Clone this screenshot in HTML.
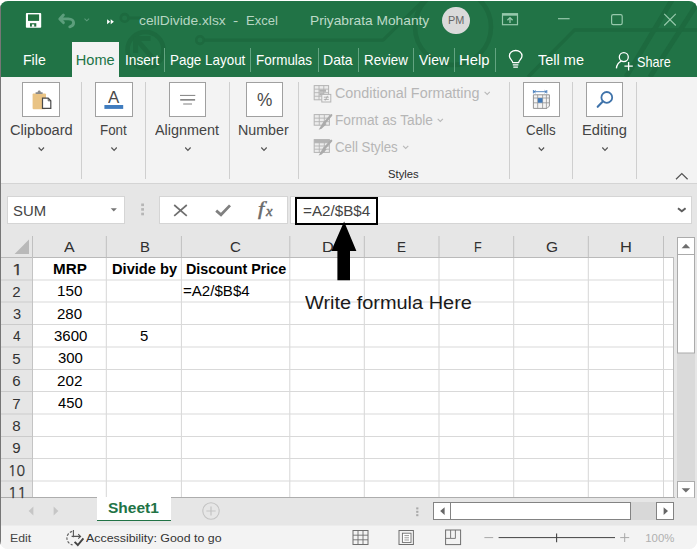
<!DOCTYPE html>
<html><head><meta charset="utf-8">
<style>
html,body{margin:0;padding:0;}
body{width:700px;height:549px;overflow:hidden;background:#ffffff;position:relative;font-family:"Liberation Sans",sans-serif;}
.a,.t,svg{position:absolute;}
.t{white-space:nowrap;line-height:1;transform-origin:0 50%;}
#win{position:absolute;left:0;top:1px;width:697px;height:548px;background:#f3f3f3;overflow:hidden;border-radius:8px 8px 8px 8px;}
#inner{position:absolute;left:0;top:-1px;width:700px;height:549px;}
.sep{position:absolute;width:1px;background:#63a481;top:48px;height:24px;}
.rsep{position:absolute;width:1px;background:#cfcfcf;top:82px;height:97px;}
.box{position:absolute;top:82px;width:35.7px;height:33.4px;background:#fff;border:1px solid #a0a0a0;}
.vl{position:absolute;width:1px;background:#dadada;top:257px;height:241px;}
.hl{position:absolute;height:1px;background:#dadada;left:33px;width:641px;}
.chl{position:absolute;width:1px;background:#c4c4c4;top:238px;height:19px;}
.rhl{position:absolute;height:1px;background:#c4c4c4;left:1px;width:32px;}
</style></head><body>
<div id="win"><div id="inner">
<div class="a" style="left:0;top:0;width:700px;height:77px;background:#217346;"></div>
<svg style="left:0px;top:0px;" width="700" height="77" viewBox="0 0 700 77"><circle cx="124.6" cy="17.9" r="3.8" fill="none" stroke="#1d6a3f" stroke-width="2.6"/><path d="M129 17.9 H141" fill="none" stroke="#1d6a3f" stroke-width="3"/><circle cx="145.5" cy="50" r="18" fill="none" stroke="#1d6a3f" stroke-width="4.5"/><path d="M155 61 L137.5 40.5 M135.6 38.6 H150.5 M135.6 36.4 V53" fill="none" stroke="#1d6a3f" stroke-width="5"/><circle cx="200" cy="40.1" r="3.8" fill="none" stroke="#1d6a3f" stroke-width="2.6"/><path d="M204.4 40.1 H383 L424 0" fill="none" stroke="#1d6a3f" stroke-width="3.2"/><circle cx="453" cy="27" r="38" fill="none" stroke="#1d6a3f" stroke-width="4.5"/><path d="M528 77 L574.5 30 H697" fill="none" stroke="#1d6a3f" stroke-width="3.4"/><path d="M626 77 L672 0" fill="none" stroke="#1d6a3f" stroke-width="5"/><path d="M650 77 L697 4" fill="none" stroke="#1d6a3f" stroke-width="5"/></svg>
<!-- avatar -->
<div class="a" style="left:442.3px;top:6.6px;width:27.6px;height:27.6px;border-radius:50%;background:#dadada;"></div>
<!-- active tab -->
<div class="a" style="left:72px;top:42px;width:47px;height:36px;background:#f3f3f3;"></div>
<div class="sep" style="left:164px"></div><div class="sep" style="left:250px"></div><div class="sep" style="left:318px"></div><div class="sep" style="left:358px"></div><div class="sep" style="left:413px"></div><div class="sep" style="left:454px"></div><div class="sep" style="left:495px"></div>
<svg style="left:24px;top:11px;" width="20" height="19" viewBox="24 11 20 19"><rect x="25.9" y="13.1" width="15.3" height="14.6" rx="0.8" fill="#fff"/><rect x="28" y="14.4" width="11.1" height="6.5" fill="#21703f"/><rect x="30" y="23.2" width="6.3" height="3.4" fill="#21703f"/><rect x="31.9" y="24.4" width="2.3" height="2.4" fill="#fff"/></svg>
<svg style="left:56px;top:11px;" width="36" height="19" viewBox="56 11 36 19"><path d="M63.4 15 L59.8 18.9 L63.4 22.6 M60.4 18.9 H68.3 C71.8 18.9 73.6 20.8 73.6 22.8 C73.6 24.8 72.2 26.2 69.8 26.8" fill="none" stroke="#5c9e7c" stroke-width="2.9" stroke-linecap="round" stroke-linejoin="round"/><path d="M84.5 18.7 L86.8 20.8 L89.1 18.7" fill="none" stroke="#5a9c7a" stroke-width="1.1"/></svg>
<svg style="left:105px;top:17px;" width="12" height="10" viewBox="105 17 12 10"><path d="M107.1 19.3 L110.2 21.8 L107.1 24.3 Z M110.7 19.3 L113.9 21.8 L110.7 24.3 Z" fill="#fff"/></svg>
<svg style="left:500px;top:11px;" width="20" height="17" viewBox="500 11 20 17"><rect x="502.5" y="13.9" width="15" height="10.8" fill="none" stroke="#96c8ab" stroke-width="1.2"/><rect x="502" y="13.3" width="16" height="2.4" fill="#96c8ab"/><path d="M510 23 V17.8 M507.4 20.2 L510 17.6 L512.6 20.2" fill="none" stroke="#96c8ab" stroke-width="1.3"/></svg>
<svg style="left:556px;top:16px;" width="16" height="6" viewBox="556 16 16 6"><rect x="558" y="18.1" width="11.6" height="1.2" fill="#96c8ab"/></svg>
<svg style="left:609px;top:12px;" width="16" height="16" viewBox="609 12 16 16"><rect x="611.6" y="14.7" width="10.6" height="10" rx="1.6" fill="none" stroke="#96c8ab" stroke-width="1.2"/></svg>
<svg style="left:662px;top:12px;" width="16" height="16" viewBox="662 12 16 16"><path d="M664.2 13.9 L675.8 25.5 M675.8 13.9 L664.2 25.5" fill="none" stroke="#96c8ab" stroke-width="1.2"/></svg>
<svg style="left:506px;top:47px;" width="20" height="24" viewBox="506 47 20 24"><path d="M512.7 62.6 C512.7 60.4 509.4 59.2 509.4 56.1 C509.4 52.8 512.2 50.5 515.7 50.5 C519.2 50.5 522 52.8 522 56.1 C522 59.2 518.7 60.4 518.7 62.6 Z" fill="none" stroke="#fff" stroke-width="1.3" stroke-linejoin="round"/><path d="M512.8 64.8 H518.4 M513.3 67.2 H517.9" fill="none" stroke="#fff" stroke-width="1.3"/></svg>
<svg style="left:614px;top:47px;" width="22" height="24" viewBox="614 47 22 24"><circle cx="623.8" cy="57.1" r="4.5" fill="none" stroke="#fff" stroke-width="1.3"/><path d="M616.4 68.4 C616.8 64.6 618.6 62.4 621.4 61.2" fill="none" stroke="#fff" stroke-width="1.3"/><path d="M628.6 62 V70.4 M624.4 66.2 H632.8" fill="none" stroke="#fff" stroke-width="1.3"/></svg>
<!-- ribbon -->
<div class="a" style="left:0;top:183px;width:700px;height:14px;background:#e6e6e6;"></div>
<div class="a" style="left:0;top:183px;width:700px;height:1px;background:#d4d4d4;"></div>
<div class="box" style="left:22px;width:35.8px"></div><div class="box" style="left:95.1px;width:35.7px"></div><div class="box" style="left:169px;width:35.1px"></div><div class="box" style="left:245.6px;width:35.2px"></div><div class="box" style="left:522.9px;width:35.1px"></div><div class="box" style="left:586.3px;width:35.1px"></div>
<div class="rsep" style="left:81px"></div><div class="rsep" style="left:145px"></div><div class="rsep" style="left:229px"></div><div class="rsep" style="left:298px"></div><div class="rsep" style="left:509px"></div><div class="rsep" style="left:572px"></div><div class="rsep" style="left:636px"></div>
<svg style="left:0px;top:80px;" width="700" height="104" viewBox="0 80 700 104"><path d="M38.6 147.5 L41.3 150.3 L44 147.5" fill="none" stroke="#555" stroke-width="1.2"/><path d="M111.4 147.5 L114.1 150.3 L116.8 147.5" fill="none" stroke="#555" stroke-width="1.2"/><path d="M185.2 147.5 L187.9 150.3 L190.6 147.5" fill="none" stroke="#555" stroke-width="1.2"/><path d="M261.3 147.5 L264 150.3 L266.7 147.5" fill="none" stroke="#555" stroke-width="1.2"/><path d="M538.7 147.5 L541.4 150.3 L544.1 147.5" fill="none" stroke="#555" stroke-width="1.2"/><path d="M602.3 147.5 L605 150.3 L607.7 147.5" fill="none" stroke="#555" stroke-width="1.2"/><path d="M484.6 91.9 L487.2 94.5 L489.8 91.9" fill="none" stroke="#b9b9b9" stroke-width="1.1"/><path d="M437.7 118.9 L440.3 121.5 L442.9 118.9" fill="none" stroke="#b9b9b9" stroke-width="1.1"/><path d="M403.1 145.9 L405.7 148.5 L408.3 145.9" fill="none" stroke="#b9b9b9" stroke-width="1.1"/><path d="M676 179.2 L681.8 173.6 L687.6 179.2" fill="none" stroke="#555" stroke-width="1.3"/><rect x="32.6" y="93.4" width="13.4" height="15.8" rx="1" fill="#e9c384"/><path d="M35.6 94 V92.2 H37.6 C37.6 89.8 40.8 89.8 40.8 92.2 H42.6 V94 Z" fill="#8a8a8a"/><path d="M42.5 98.2 H48.2 L50.8 100.8 V108.4 H42.5 Z" fill="#fff" stroke="#4a4a4a" stroke-width="1.2"/><path d="M48.2 98.2 V100.8 H50.8" fill="none" stroke="#4a4a4a" stroke-width="0.9"/><rect x="104.4" y="105" width="18.8" height="3.9" fill="#3f7cbf"/><path d="M180 95.4 H195.3 M183.2 104 H192" stroke="#808080" stroke-width="1" fill="none"/><path d="M180.2 99.9 H195.1" stroke="#606060" stroke-width="1.2" fill="none"/><path d="M533.4 94.8 H549.4 V106 L547 108.4 H533.4 Z" fill="#f4f4f4" stroke="#949494" stroke-width="1"/><path d="M533.4 98 H549.4 M533.4 102.8 H549.4 M537.7 94.8 V108.4 M542.6 94.8 V108.4 M546.4 94.8 V108.4" stroke="#949494" stroke-width="0.8" fill="none"/><rect x="537.9" y="98.1" width="4.6" height="4.6" fill="#3f78b8"/><path d="M533.6 91.7 H546.6 M533.4 90 V93.4 M546.8 90 V93.4 M535.6 90.4 L534 91.7 L535.6 93 M544.6 90.4 L546.2 91.7 L544.6 93" stroke="#3f78b8" stroke-width="0.9" fill="none"/><circle cx="606.8" cy="97.4" r="5.4" fill="none" stroke="#3f73aa" stroke-width="1.8"/><path d="M602.8 101.6 L597.7 106.8" stroke="#3f73aa" stroke-width="2.1" fill="none" stroke-linecap="round"/><rect x="314.2" y="85.6" width="14.4" height="14.2" fill="#ececec" stroke="#b4b4b4" stroke-width="1"/><path d="M314.2 89.15 H328.6 M314.2 92.7 H328.6 M314.2 96.25 H328.6 M319 85.6 V99.8 M323.8 85.6 V99.8 " stroke="#b4b4b4" stroke-width="0.9" fill="none"/><rect x="319.4" y="89.6" width="6.6" height="2.2" fill="#b0b0b0"/><rect x="319.4" y="93.2" width="4.4" height="2.2" fill="#b0b0b0"/><rect x="321.8" y="94.4" width="9" height="7.6" fill="#f3f3f3" stroke="#b4b4b4" stroke-width="1"/><path d="M323.8 97.2 H328.8 M323.8 99.4 H328.8 M327.6 95.8 L325.2 100.6" stroke="#a8a8a8" stroke-width="0.9" fill="none"/><rect x="314.2" y="114.6" width="15.2" height="10.6" fill="#ececec" stroke="#b4b4b4" stroke-width="1"/><path d="M314.2 118.133 H329.4 M314.2 121.667 H329.4 M319.267 114.6 V125.2 M324.333 114.6 V125.2 " stroke="#b4b4b4" stroke-width="0.9" fill="none"/><path d="M331.2 115.2 L325 122.2" stroke="#ababab" stroke-width="2.3" fill="none" stroke-linecap="round"/><path d="M323.6 121.4 L326.6 124 L321.6 128.8 L318.6 129.8 Z" fill="#ababab"/><rect x="314.2" y="139.6" width="15.2" height="12.8" fill="#ececec" stroke="#b4b4b4" stroke-width="1"/><path d="M314.2 142.8 H329.4 M314.2 146 H329.4 M314.2 149.2 H329.4 M319.267 139.6 V152.4 M324.333 139.6 V152.4 " stroke="#b4b4b4" stroke-width="0.9" fill="none"/><rect x="314.2" y="139.6" width="15.2" height="3.2" fill="#b4b4b4"/><path d="M331.2 140.8 L325 147.8" stroke="#ababab" stroke-width="2.3" fill="none" stroke-linecap="round"/><path d="M323.6 147 L326.6 149.6 L321.6 154.4 L318.6 155.4 Z" fill="#ababab"/></svg>
<!-- formula bar area -->
<div class="a" style="left:0;top:184px;width:700px;height:52px;background:#e6e6e6;"></div>
<div class="a" style="left:7px;top:196px;width:116px;height:26px;background:#fff;border:1px solid #d5d5d5;"></div>
<div class="a" style="left:159px;top:196px;width:127px;height:26px;background:#fff;border:1px solid #d5d5d5;"></div>
<div class="a" style="left:290px;top:196px;width:400px;height:26px;background:#fff;border:1px solid #d5d5d5;"></div>
<div class="a" style="left:295px;top:197px;width:79px;height:24px;border:2px solid #000;background:#fff;"></div>
<svg style="left:0px;top:196px;" width="700" height="30" viewBox="0 196 700 30"><path d="M110.7 208.3 H116.9 L113.8 211.6 Z" fill="#767676"/><rect x="141.2" y="203.5" width="2.8" height="2.6" fill="#b6b6b6"/><rect x="141.2" y="208.1" width="2.8" height="2.6" fill="#b6b6b6"/><rect x="141.2" y="212.7" width="2.8" height="2.6" fill="#b6b6b6"/><path d="M174.2 205 L186.8 215.8 M186.8 205 L174.2 215.8" stroke="#707070" stroke-width="1.7" fill="none"/><path d="M216.2 210.6 L221 214.8 L230 205.4" stroke="#808080" stroke-width="2.8" fill="none"/><path d="M678 208.2 L681.8 211.3 L685.6 208.2" stroke="#5e5e5e" stroke-width="2" fill="none"/></svg>
<!-- grid -->
<div class="a" style="left:0;top:235px;width:700px;height:263px;background:#e6e6e6;"></div>
<div class="a" style="left:33px;top:257px;width:641px;height:241px;background:#fff;"></div>
<svg style="left:0px;top:220px;" width="700" height="279" viewBox="0 220 700 279"><rect x="105.8" y="257" width="1" height="241" fill="#d6d6d6"/><rect x="180.9" y="257" width="1" height="241" fill="#d6d6d6"/><rect x="289.3" y="257" width="1" height="241" fill="#d6d6d6"/><rect x="363.8" y="257" width="1" height="241" fill="#d6d6d6"/><rect x="438.5" y="257" width="1" height="241" fill="#d6d6d6"/><rect x="513.2" y="257" width="1" height="241" fill="#d6d6d6"/><rect x="587.8" y="257" width="1" height="241" fill="#d6d6d6"/><rect x="663" y="257" width="1" height="241" fill="#d6d6d6"/><rect x="33" y="279.5" width="641" height="1" fill="#d9d9d9"/><rect x="1" y="279.5" width="32" height="1" fill="#cbcbcb"/><rect x="33" y="301.5" width="641" height="1" fill="#d9d9d9"/><rect x="1" y="301.5" width="32" height="1" fill="#cbcbcb"/><rect x="33" y="324" width="641" height="1" fill="#d9d9d9"/><rect x="1" y="324" width="32" height="1" fill="#cbcbcb"/><rect x="33" y="346.5" width="641" height="1" fill="#d9d9d9"/><rect x="1" y="346.5" width="32" height="1" fill="#cbcbcb"/><rect x="33" y="369" width="641" height="1" fill="#d9d9d9"/><rect x="1" y="369" width="32" height="1" fill="#cbcbcb"/><rect x="33" y="391" width="641" height="1" fill="#d9d9d9"/><rect x="1" y="391" width="32" height="1" fill="#cbcbcb"/><rect x="33" y="413.5" width="641" height="1" fill="#d9d9d9"/><rect x="1" y="413.5" width="32" height="1" fill="#cbcbcb"/><rect x="33" y="436" width="641" height="1" fill="#d9d9d9"/><rect x="1" y="436" width="32" height="1" fill="#cbcbcb"/><rect x="33" y="458" width="641" height="1" fill="#d9d9d9"/><rect x="1" y="458" width="32" height="1" fill="#cbcbcb"/><rect x="33" y="480.5" width="641" height="1" fill="#d9d9d9"/><rect x="1" y="480.5" width="32" height="1" fill="#cbcbcb"/><rect x="32" y="236" width="1" height="21" fill="#c0c0c0"/><rect x="105.8" y="236" width="1" height="21" fill="#c0c0c0"/><rect x="180.9" y="236" width="1" height="21" fill="#c0c0c0"/><rect x="289.3" y="236" width="1" height="21" fill="#c0c0c0"/><rect x="363.8" y="236" width="1" height="21" fill="#c0c0c0"/><rect x="438.5" y="236" width="1" height="21" fill="#c0c0c0"/><rect x="513.2" y="236" width="1" height="21" fill="#c0c0c0"/><rect x="587.8" y="236" width="1" height="21" fill="#c0c0c0"/><rect x="663" y="236" width="1" height="21" fill="#c0c0c0"/><rect x="1" y="257" width="673" height="1" fill="#bababa"/><rect x="32" y="257" width="1" height="241" fill="#c4c4c4"/><rect x="673" y="257" width="1" height="241" fill="#bdbdbd"/><path d="M29 239.6 V254 H14.6 Z" fill="#b9b9b9"/><path d="M344.1 221.6 L356.4 251 H350 V280.3 H337.4 V251 H331.2 Z" fill="#000"/><rect x="677" y="237" width="18" height="261" fill="#dadada"/><rect x="677.5" y="237.5" width="17" height="17" fill="#fff" stroke="#ababab" stroke-width="1"/><rect x="677.5" y="254.5" width="17" height="98.5" fill="#fff" stroke="#ababab" stroke-width="1"/><rect x="677.5" y="481.5" width="17" height="16.5" fill="#fff" stroke="#ababab" stroke-width="1"/><path d="M681.6 248.2 L685.9 243.8 L690.2 248.2 Z" fill="#6e6e6e"/><path d="M681.6 488.2 L685.9 492.6 L690.2 488.2 Z" fill="#6e6e6e"/></svg>
<!-- sheet tab bar -->
<div class="a" style="left:0;top:498px;width:700px;height:27px;background:#e6e6e6;"></div>
<div class="a" style="left:0;top:497px;width:675px;height:1.3px;background:#adadad;"></div>
<div class="a" style="left:97px;top:497px;width:74px;height:23.4px;background:#fff;border-bottom:1.8px solid #217346;"></div>
<svg style="left:0px;top:498px;" width="700" height="27" viewBox="0 498 700 27"><path d="M33.4 506.6 V515.4 L28.6 511 Z" fill="#c6c6c6"/><path d="M53.6 506.6 V515.4 L58.4 511 Z" fill="#c6c6c6"/><circle cx="211" cy="511" r="8.2" fill="none" stroke="#c3c3c3" stroke-width="1.1"/><path d="M206.4 511 H215.6 M211 506.4 V515.6" stroke="#c3c3c3" stroke-width="1.2" fill="none"/><rect x="416.2" y="507.4" width="2.2" height="2" fill="#a9a9a9"/><rect x="416.2" y="510.8" width="2.2" height="2" fill="#a9a9a9"/><rect x="416.2" y="514.2" width="2.2" height="2" fill="#a9a9a9"/><rect x="433" y="502" width="241" height="18" fill="#d8d8d8"/><rect x="433.5" y="502.5" width="17" height="17" fill="#fff" stroke="#838383" stroke-width="1"/><rect x="450.5" y="502.5" width="180" height="17" fill="#fff" stroke="#838383" stroke-width="1"/><rect x="656.5" y="502.5" width="17" height="17" fill="#fff" stroke="#838383" stroke-width="1"/><path d="M444.6 507.2 V515 L440.2 511.1 Z" fill="#666"/><path d="M663.6 507.2 V515 L668 511.1 Z" fill="#666"/></svg>
<!-- status bar -->
<div class="a" style="left:0;top:525px;width:700px;height:25px;background:#f3f3f3;"></div><div class="a" style="left:0;top:525px;width:700px;height:1px;background:#ececec;"></div>
<svg style="left:0px;top:525px;" width="700" height="24" viewBox="0 525 700 24"><path d="M72.2 531.4 A6.9 6.9 0 0 0 72.6 544.9" fill="none" stroke="#666" stroke-width="1.2" stroke-dasharray="2.6 1.5"/><path d="M73.4 530 V537.2 M71.6 536.4 H80.4 M78.2 534.2 L80.6 536.4 L78.2 538.6" fill="none" stroke="#555" stroke-width="1.1"/><path d="M74.6 541.8 L77.8 545 L83.4 538.4" fill="none" stroke="#444" stroke-width="1.9"/><rect x="353" y="530.5" width="15" height="14" fill="none" stroke="#6e6e6e" stroke-width="1"/><path d="M353 535.2 H368 M353 539.8 H368 M358 530.5 V544.5 M363 530.5 V544.5" stroke="#6e6e6e" stroke-width="0.9" fill="none"/><rect x="399" y="530.5" width="14.4" height="14" fill="none" stroke="#6e6e6e" stroke-width="1"/><rect x="402.4" y="533.2" width="8.6" height="9.2" fill="#fff" stroke="#6e6e6e" stroke-width="0.9"/><path d="M404.4 535.6 H409 M404.4 537.8 H409 M404.4 540 H409" stroke="#6e6e6e" stroke-width="0.7" fill="none"/><rect x="445.6" y="530" width="15" height="14.6" fill="none" stroke="#6e6e6e" stroke-width="1"/><path d="M450.6 530 V538.4 H445.6 M455.4 530 V538.4 H450.6" stroke="#6e6e6e" stroke-width="0.9" fill="none"/><path d="M484.4 537.6 H493.2" stroke="#a8a8a8" stroke-width="1" fill="none"/><path d="M498.6 537.6 H615" stroke="#444" stroke-width="1" fill="none"/><path d="M556.6 533.4 V542.2" stroke="#444" stroke-width="1.1" fill="none"/><path d="M620.2 537.6 H629.2 M624.7 533.2 V542" stroke="#a8a8a8" stroke-width="1" fill="none"/></svg>
<div class="t" id="title1" style="left:139.06px;top:15.36px;font-size:12.8px;color:#b7d6c3;transform:scaleX(1.0792);">cellDivide.xlsx</div>
<div class="t" id="title2" style="left:233.38px;top:15.36px;font-size:12.8px;color:#b7d6c3;transform:scaleX(1.2308);">-</div>
<div class="t" id="title3" style="left:245.98px;top:15.36px;font-size:12.8px;color:#b7d6c3;transform:scaleX(1.0169);">Excel</div>
<div class="t" id="user" style="left:309.86px;top:13.63px;font-size:13.2px;color:#bddac8;transform:scaleX(1.0428);">Priyabrata Mohanty</div>
<div class="t" id="pm" style="left:448.01px;top:15.58px;font-size:10.3px;color:#666666;transform:scaleX(1.0571);">PM</div>
<div class="t" id="tFile" style="left:23.49px;top:52.54px;font-size:14.6px;color:#ffffff;transform:scaleX(0.9674);">File</div>
<div class="t" id="tHome" style="left:75.75px;top:52.54px;font-size:14.6px;color:#217346;transform:scaleX(1.0000);">Home</div>
<div class="t" id="tInsert" style="left:124.83px;top:52.54px;font-size:14.6px;color:#ffffff;transform:scaleX(0.9362);">Insert</div>
<div class="t" id="tPL" style="left:169.85px;top:52.54px;font-size:14.6px;color:#ffffff;transform:scaleX(0.9193);">Page Layout</div>
<div class="t" id="tForm" style="left:256.15px;top:52.54px;font-size:14.6px;color:#ffffff;transform:scaleX(0.9220);">Formulas</div>
<div class="t" id="tData" style="left:323.10px;top:52.54px;font-size:14.6px;color:#ffffff;transform:scaleX(0.9627);">Data</div>
<div class="t" id="tRev" style="left:363.85px;top:52.54px;font-size:14.6px;color:#ffffff;transform:scaleX(0.9183);">Review</div>
<div class="t" id="tView" style="left:419.06px;top:52.54px;font-size:14.6px;color:#ffffff;transform:scaleX(0.9581);">View</div>
<div class="t" id="tHelp" style="left:459.43px;top:52.54px;font-size:14.6px;color:#ffffff;transform:scaleX(1.0124);">Help</div>
<div class="t" id="tTell" style="left:537.75px;top:52.54px;font-size:14.6px;color:#ffffff;transform:scaleX(0.9945);">Tell me</div>
<div class="t" id="tShare" style="left:636.85px;top:54.54px;font-size:14.6px;color:#ffffff;transform:scaleX(0.8667);">Share</div>
<div class="t" id="lClip" style="left:9.50px;top:124.32px;font-size:13.8px;color:#444444;transform:scaleX(1.0626);">Clipboard</div>
<div class="t" id="lFont" style="left:99.73px;top:124.32px;font-size:13.8px;color:#444444;transform:scaleX(0.9698);">Font</div>
<div class="t" id="lAlign" style="left:155.30px;top:124.32px;font-size:13.8px;color:#444444;transform:scaleX(1.0449);">Alignment</div>
<div class="t" id="lNum" style="left:238.37px;top:124.32px;font-size:13.8px;color:#444444;transform:scaleX(1.0333);">Number</div>
<div class="t" id="lCells" style="left:525.88px;top:124.32px;font-size:13.8px;color:#444444;transform:scaleX(0.9661);">Cells</div>
<div class="t" id="lEdit" style="left:581.84px;top:124.32px;font-size:13.8px;color:#444444;transform:scaleX(1.0634);">Editing</div>
<div class="t" id="lCF" style="left:334.92px;top:86.82px;font-size:13.8px;color:#b6b6b6;transform:scaleX(1.0412);">Conditional Formatting</div>
<div class="t" id="lFT" style="left:334.71px;top:113.72px;font-size:13.8px;color:#b6b6b6;transform:scaleX(0.9928);">Format as Table</div>
<div class="t" id="lCS" style="left:334.78px;top:140.82px;font-size:13.8px;color:#b6b6b6;transform:scaleX(0.9625);">Cell Styles</div>
<div class="t" id="lStyles" style="left:388.38px;top:169.47px;font-size:10.9px;color:#2a2a2a;transform:scaleX(1.0330);">Styles</div>
<div class="t" id="pct" style="left:256.51px;top:91.89px;font-size:17.5px;color:#4a4a4a;transform:scaleX(0.9862);">%</div>
<div class="t" id="fontA" style="left:108.30px;top:89.56px;font-size:16px;color:#4a4a4a;transform:scaleX(1.0571);">A</div>
<div class="t" id="sum" style="left:13.22px;top:203.91px;font-size:14.4px;color:#444444;transform:scaleX(1.0333);">SUM</div>
<div class="t" id="fml" style="left:303.11px;top:203.91px;font-size:14.4px;color:#444444;transform:scaleX(1.0576);">=A2/$B$4</div>
<div class="t" id="fxf" style="left:257.60px;top:200.12px;font-size:18px;color:#6a6a6a;transform:scaleX(1.2414);font-family:'Liberation Serif',serif;font-style:italic;-webkit-text-stroke:0.45px #6a6a6a;">f</div>
<div class="t" id="fxx" style="left:265.65px;top:203.86px;font-size:14.5px;color:#6a6a6a;transform:scaleX(1.0074);font-family:'Liberation Serif',serif;font-style:italic;-webkit-text-stroke:0.45px #6a6a6a;">x</div>
<div class="t" id="hA" style="left:64.30px;top:239.68px;font-size:14.2px;color:#303030;transform:scaleX(1.1263);">A</div>
<div class="t" id="hB" style="left:139.68px;top:239.68px;font-size:14.2px;color:#303030;transform:scaleX(1.0533);">B</div>
<div class="t" id="hC" style="left:230.20px;top:239.68px;font-size:14.2px;color:#303030;transform:scaleX(1.0667);">C</div>
<div class="t" id="hD" style="left:321.66px;top:239.68px;font-size:14.2px;color:#303030;transform:scaleX(1.1515);">D</div>
<div class="t" id="hE" style="left:397.02px;top:239.68px;font-size:14.2px;color:#303030;transform:scaleX(0.9467);">E</div>
<div class="t" id="hF" style="left:473.59px;top:239.68px;font-size:14.2px;color:#303030;transform:scaleX(0.8889);">F</div>
<div class="t" id="hG" style="left:545.88px;top:239.68px;font-size:14.2px;color:#303030;transform:scaleX(1.0919);">G</div>
<div class="t" id="hH" style="left:620.25px;top:239.68px;font-size:14.2px;color:#303030;transform:scaleX(1.1613);">H</div>
<div class="t" id="r1" style="left:10.91px;top:262.65px;font-size:14.0px;color:#333333;transform:scaleX(1.4462);font-family:NanumGothic,'Liberation Sans',sans-serif;-webkit-text-stroke:0.25px #333;">1</div>
<div class="t" id="r2" style="left:12.25px;top:283.77px;font-size:15.1px;color:#333333;transform:scaleX(1.0000);">2</div>
<div class="t" id="r3" style="left:12.52px;top:306.12px;font-size:15.1px;color:#333333;transform:scaleX(0.9655);">3</div>
<div class="t" id="r4" style="left:12.77px;top:328.47px;font-size:15.1px;color:#333333;transform:scaleX(0.9032);">4</div>
<div class="t" id="r5" style="left:12.25px;top:350.82px;font-size:15.1px;color:#333333;transform:scaleX(1.0000);">5</div>
<div class="t" id="r6" style="left:12.25px;top:373.17px;font-size:15.1px;color:#333333;transform:scaleX(1.0000);">6</div>
<div class="t" id="r7" style="left:12.25px;top:395.52px;font-size:15.1px;color:#333333;transform:scaleX(1.0000);">7</div>
<div class="t" id="r8" style="left:12.25px;top:417.87px;font-size:15.1px;color:#333333;transform:scaleX(1.0000);">8</div>
<div class="t" id="r9" style="left:12.25px;top:440.22px;font-size:15.1px;color:#333333;transform:scaleX(1.0000);">9</div>
<div class="t" id="r10" style="left:8.18px;top:463.80px;font-size:14.0px;color:#333333;transform:scaleX(1.0105);font-family:NanumGothic,'Liberation Sans',sans-serif;-webkit-text-stroke:0.25px #333;">10</div>
<div class="t" id="r11" style="left:8.22px;top:486.15px;font-size:14.0px;color:#333333;transform:scaleX(1.0894);font-family:NanumGothic,'Liberation Sans',sans-serif;-webkit-text-stroke:0.25px #333;">11</div>
<div class="t" id="cA1" style="left:52.94px;top:262.01px;font-size:14.4px;color:#000000;transform:scaleX(1.0557);font-weight:bold;">MRP</div>
<div class="t" id="cB1" style="left:111.98px;top:262.01px;font-size:14.4px;color:#000000;transform:scaleX(1.0167);font-weight:bold;">Divide by</div>
<div class="t" id="cC1" style="left:185.61px;top:262.01px;font-size:14.4px;color:#000000;transform:scaleX(0.9945);font-weight:bold;">Discount Price</div>
<div class="t" id="cA2" style="left:57.14px;top:284.36px;font-size:14.4px;color:#000000;transform:scaleX(1.0578);">150</div>
<div class="t" id="cC2" style="left:182.71px;top:284.36px;font-size:14.4px;color:#000000;transform:scaleX(1.0480);">=A2/$B$4</div>
<div class="t" id="cA3" style="left:57.42px;top:306.71px;font-size:14.4px;color:#000000;transform:scaleX(1.0462);">280</div>
<div class="t" id="cA4" style="left:53.68px;top:329.06px;font-size:14.4px;color:#000000;transform:scaleX(1.0419);">3600</div>
<div class="t" id="cB4" style="left:139.52px;top:329.06px;font-size:14.4px;color:#000000;transform:scaleX(1.0370);">5</div>
<div class="t" id="cA5" style="left:57.68px;top:351.41px;font-size:14.4px;color:#000000;transform:scaleX(1.0348);">300</div>
<div class="t" id="cA6" style="left:57.41px;top:373.76px;font-size:14.4px;color:#000000;transform:scaleX(1.0578);">202</div>
<div class="t" id="cA7" style="left:57.94px;top:396.11px;font-size:14.4px;color:#000000;transform:scaleX(1.0237);">450</div>
<div class="t" id="wfh" style="left:304.63px;top:293.91px;font-size:18.3px;color:#1a1a1a;transform:scaleX(1.0901);">Write formula Here</div>
<div class="t" id="sheet1" style="left:108.47px;top:500.73px;font-size:14.5px;color:#217346;transform:scaleX(1.0695);font-weight:bold;">Sheet1</div>
<div class="t" id="edit" style="left:9.52px;top:532.65px;font-size:11.4px;color:#444444;transform:scaleX(1.0757);">Edit</div>
<div class="t" id="acc" style="left:86.00px;top:532.65px;font-size:11.4px;color:#333333;transform:scaleX(1.0865);">Accessibility: Good to go</div>
<div class="t" id="zoom" style="left:645.25px;top:532.65px;font-size:11.4px;color:#b0b0b0;transform:scaleX(1.0000);">100%</div>
<!--OVER-->
<div class="a" style="left:0;top:0;width:1px;height:549px;background:#767676;"></div>
</div></div>
</body></html>
